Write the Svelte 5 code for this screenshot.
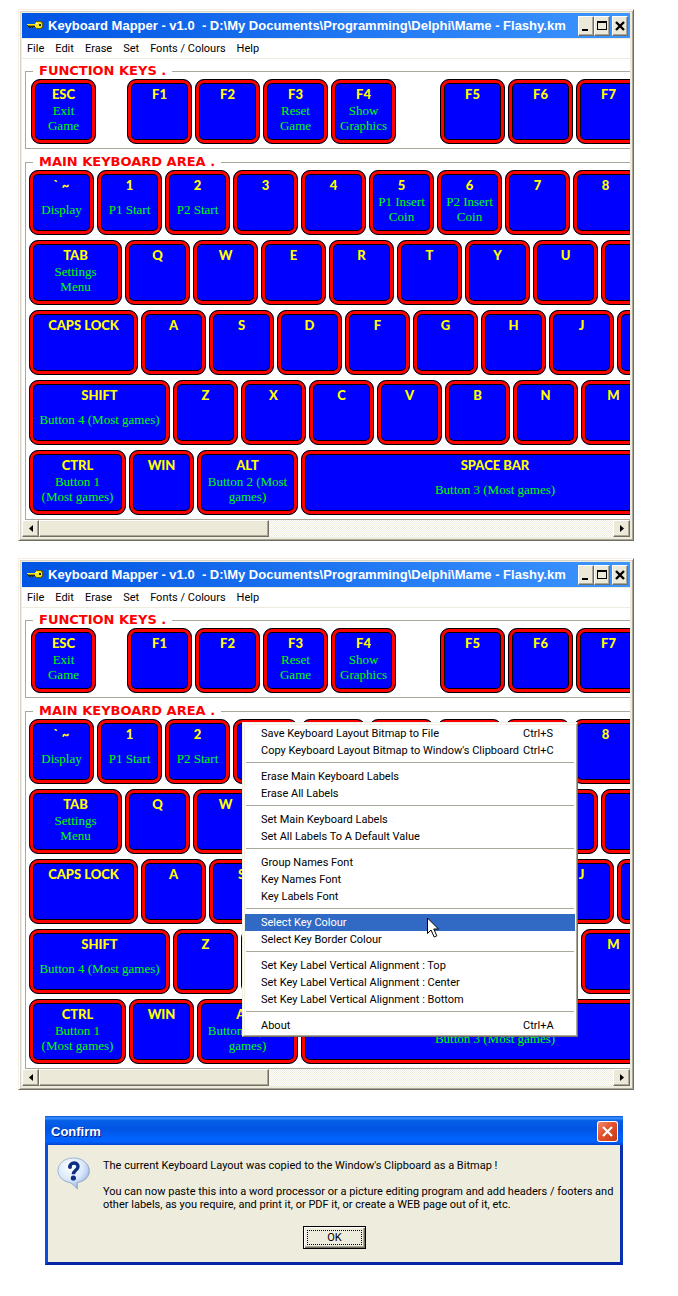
<script>
  const functionKeys = [
    { name: 'ESC', label: 'Exit\nGame' },
    { name: 'F1', before: 28 },
    { name: 'F2' },
    { name: 'F3', label: 'Reset\nGame' },
    { name: 'F4', label: 'Show\nGraphics' },
    { name: 'F5', before: 41 },
    { name: 'F6' },
    { name: 'F7' }
  ];
  const plain = (names) => names.map((name) => ({ name }));
  const mainRows = [
    [
      { name: '` ~', label: 'Display' },
      { name: '1', label: 'P1 Start' },
      { name: '2', label: 'P2 Start' },
      ...plain(['3', '4']),
      { name: '5', label: 'P1 Insert\nCoin' },
      { name: '6', label: 'P2 Insert\nCoin' },
      ...plain(['7', '8'])
    ],
    [{ name: 'TAB', label: 'Settings\nMenu', width: 93 }, ...plain(['Q', 'W', 'E', 'R', 'T', 'Y', 'U', ''])],
    [{ name: 'CAPS LOCK', width: 109 }, ...plain(['A', 'S', 'D', 'F', 'G', 'H', 'J', ''])],
    [{ name: 'SHIFT', label: 'Button 4 (Most games)', width: 141 }, ...plain(['Z', 'X', 'C', 'V', 'B', 'N', 'M'])],
    [
      { name: 'CTRL', label: 'Button 1\n(Most games)', width: 97 },
      { name: 'WIN' },
      { name: 'ALT', label: 'Button 2 (Most\ngames)', width: 101 },
      { name: 'SPACE BAR', label: 'Button 3 (Most games)', width: 388 }
    ]
  ];
  const menus = ['File', 'Edit', 'Erase', 'Set', 'Fonts / Colours', 'Help'];
  const popup = [
    [['Save Keyboard Layout Bitmap to File', 'Ctrl+S'], ["Copy Keyboard Layout Bitmap to Window's Clipboard", 'Ctrl+C']],
    [['Erase Main Keyboard Labels'], ['Erase All Labels']],
    [['Set Main Keyboard Labels'], ['Set All Labels To A Default Value']],
    [['Group Names Font'], ['Key Names Font'], ['Key Labels Font']],
    [['Select Key Colour'], ['Select Key Border Colour']],
    [
      ['Set Key Label Vertical Alignment : Top'],
      ['Set Key Label Vertical Alignment : Center'],
      ['Set Key Label Vertical Alignment : Bottom']
    ],
    [['About', 'Ctrl+A']]
  ];
  let selected = $state('Select Key Colour');
  const title = 'Keyboard Mapper - v1.0  - D:\\My Documents\\Programming\\Delphi\\Mame - Flashy.km';
</script>

{#snippet keyCap(k)}
  <button class="key" style:width="{k.width ?? 65}px" style:margin-left="{k.before ?? 0}px">
    <span class="name">{k.name}</span>
    {#if k.label}<span class="label">{k.label}</span>{/if}
  </button>
{/snippet}

{#snippet mapper(withPopup)}
  <section class="window">
    <header class="titlebar">
      <svg class="key-icon" width="18" height="11" viewBox="0 0 18 11" shape-rendering="crispEdges" aria-hidden="true">
        <path d="M1 4h8v3H7v1H6V7H5v1H3V7H2V6H1z" fill="#222" />
        <path d="M10 1h6v1h1v6h-1v1h-6V8H9V2h1z" fill="#5c5c14" />
        <path d="M1 4h8v1H1zM10 2h5v1h1v4h-1v1h-5V7H9V3h1z" fill="#f2e51c" />
        <path d="M2 5h7v1H2z" fill="#a39a12" />
        <path d="M13 4h2v2h-2z" fill="#222" />
        <path d="M10 3h2v1h-2z" fill="#fffbb0" />
      </svg>
      <h1>{title}</h1>
      <div class="controls">
        <button aria-label="Minimize"><svg width="12" height="12" viewBox="0 0 12 12"><path d="M2 9h6v2H2z" /></svg></button>
        <button aria-label="Maximize"><svg width="12" height="12" viewBox="0 0 12 12"><path fill-rule="evenodd" d="M1 1h10v9H1zM2 3v6h8V3z" /></svg></button>
        <button aria-label="Close"><svg width="12" height="12" viewBox="0 0 12 12"><path d="M2 2l8 8M10 2l-8 8" fill="none" stroke="#000" stroke-width="2.4" /></svg></button>
      </div>
    </header>
    <nav class="menubar">
      {#each menus as m}<button>{m}</button>{/each}
    </nav>
    <div class="viewport">
      <div class="board">
        <fieldset class="functions">
          <legend>FUNCTION KEYS .</legend>
          <div class="row">{#each functionKeys as k}{@render keyCap(k)}{/each}</div>
        </fieldset>
        <fieldset class="main">
          <legend>MAIN KEYBOARD AREA .</legend>
          {#each mainRows as row}
            <div class="row">{#each row as k}{@render keyCap(k)}{/each}</div>
          {/each}
        </fieldset>
      </div>
    </div>
    <div class="scrollbar">
      <button aria-label="Scroll left"><svg width="4" height="7" viewBox="0 0 4 7"><path d="M4 0v7L0 3.5z" /></svg></button>
      <div class="track"><div class="thumb"></div></div>
      <button aria-label="Scroll right"><svg width="4" height="7" viewBox="0 0 4 7"><path d="M0 0v7L4 3.5z" /></svg></button>
    </div>
    {#if withPopup}
      <div class="popup" role="menu">
        {#each popup as group, i}
          {#if i}<hr />{/if}
          {#each group as [text, shortcut]}
            <button role="menuitem" class:selected={text === selected} onmouseenter={() => (selected = text)}>
              <span>{text}</span>{#if shortcut}<span class="shortcut">{shortcut}</span>{/if}
            </button>
          {/each}
        {/each}
        <svg class="pointer" width="13" height="22" viewBox="0 0 13 22" aria-hidden="true">
          <path d="M.5 1v15.5L4 13l3.2 7 2.6-1.2L6.8 12h4.7z" fill="#fff" stroke="#000" />
        </svg>
      </div>
    {/if}
  </section>
{/snippet}

<main>
  {@render mapper(false)}
  {@render mapper(true)}

  <section class="dialog" role="dialog" aria-labelledby="confirm-title">
    <header>
      <h2 id="confirm-title">Confirm</h2>
      <button class="close" aria-label="Close"><svg width="21" height="21" viewBox="0 0 21 21"><path d="M6 6l9 9M15 6l-9 9" stroke="#fff" stroke-width="2.2" fill="none" /></svg></button>
    </header>
    <div class="body">
      <div class="message">
        <svg width="34" height="34" viewBox="0 0 34 34" aria-hidden="true">
          <defs>
            <radialGradient id="bubble" cx="40%" cy="30%" r="75%">
              <stop offset="0" stop-color="#fff" />
              <stop offset=".55" stop-color="#dce9fb" />
              <stop offset="1" stop-color="#8fb2e6" />
            </radialGradient>
          </defs>
          <path d="M17 2C8 2 2 7 2 14c0 6 4 10 11 12 3 1 5 4 8 7v-7c7-1.5 12-6 12-12C33 7 26 2 17 2z" fill="#8a8f98" opacity=".5" />
          <path d="M16.500 1C7.500 1 1 6.500 1 13.500c0 6 4.500 10.500 11.500 12 3 .8 5 3.500 7.500 6v-6c7.500-1.500 12-6 12-12C32 6.500 25.500 1 16.500 1z" fill="url(#bubble)" stroke="#8ba6cf" stroke-width=".8" />
          <path d="M12.800 9.800C13 5 21 4.600 21 9.500c0 3.700-4.600 3.900-4.600 7.700" fill="none" stroke="#0c2f83" stroke-width="3.400" />
          <circle cx="13" cy="10" r="2" fill="#0c2f83" />
          <circle cx="16.400" cy="21" r="2.600" fill="#0c2f83" />
        </svg>
        <div class="text">
          <p>The current Keyboard Layout was copied to the Window's Clipboard as a Bitmap !</p>
          <p>You can now paste this into a word processor or a picture editing program and add headers / footers and other labels, as you require, and print it, or PDF it, or create a WEB page out of it, etc.</p>
        </div>
      </div>
      <button class="ok"><span>OK</span></button>
    </div>
  </section>
</main>

<style>
  :global(body) { background: #fff; }
  button { font: inherit; color: inherit; padding: 0; margin: 0; border: 0; background: none; }
  h1, h2, p { margin: 0; }
  main {
    display: flex;
    flex-direction: column;
    gap: 17px;
    padding: 9px 44px 31px 18px;
    font: 11px/13px Roboto, "Liberation Sans", sans-serif;
    color: #000;
  }

  .window {
    position: relative;
    padding: 3px;
    background: #eeeddd;
    border: 1px solid;
    border-color: #f7eee6 #716f64 #716f64 #f7eee6;
    box-shadow: inset 1px 1px #fff, inset -1px -1px #aca899, inset 2px 2px #d8d6c8;
  }
  .titlebar {
    display: flex;
    align-items: center;
    height: 25px;
    padding: 0 2px 0 4px;
    background: linear-gradient(90deg, #0054e3, #3d95ff);
    color: #fff;
  }
  .titlebar h1 {
    flex: 1;
    min-width: 0;
    margin-left: 4px;
    overflow: hidden;
    white-space: pre;
    font: bold 13px/20px "Liberation Sans", Arial, sans-serif;
  }
  .key-icon { flex: none; }
  .controls { display: flex; }
  .controls button, .scrollbar button, .thumb {
    background: #ece9d8;
    border: 1px solid;
    border-color: #fff #716f64 #716f64 #fff;
    box-shadow: inset -1px -1px #aca899;
  }
  .controls button {
    display: grid;
    place-items: center;
    width: 16px;
    height: 20px;
  }
  .controls button:last-child { margin-left: 2px; }
  .controls svg { flex: none; }

  .menubar {
    display: flex;
    gap: 11px;
    height: 19px;
    padding: 0 5px;
    align-items: center;
    background: #fff;
    border: solid #eeeddd;
    border-width: 1px 0;
  }

  .viewport { overflow: hidden; background: #fff; }
  .board { width: max-content; min-width: 100%; padding: 4px 0 0 3px; }
  fieldset { margin: 0; border: 1px solid #aca899; }
  .functions { padding: 0 5px 4px; }
  .main { margin-top: 5px; padding: 0 3px 4px; }
  legend {
    padding: 0 6px;
    color: #f00;
    font: bold 13px/16px "DejaVu Sans", sans-serif;
  }
  .functions legend { margin-left: 2px; }
  .main legend { margin-left: 4px; }
  .row { display: flex; gap: 3px; }
  .row + .row { margin-top: 5px; }

  .key {
    flex: none;
    display: flex;
    flex-direction: column;
    align-items: center;
    justify-content: flex-start;
    height: 65px;
    padding: 6px 5px 9px;
    border: 1px solid #000;
    border-radius: 9px;
    background: #00f;
    box-shadow: inset 0 0 0 3px #f00, inset 0 0 0 4px #000;
  }
  .name {
    height: 16px;
    color: #ff0;
    font: 900 13px/16px Lato, sans-serif;
    white-space: pre;
  }
  .label {
    display: grid;
    align-content: center;
    flex: 1;
    color: #0f0;
    font: 13px/15px "Liberation Serif", "Times New Roman", serif;
    white-space: pre;
  }

  .scrollbar { display: flex; height: 17px; }
  .scrollbar button {
    display: grid;
    place-items: center;
    flex: none;
    width: 17px;
  }
  .track {
    flex: 1;
    background: repeating-conic-gradient(#fff 0 25%, #eeeddd 0 50%) 0 0 / 2px 2px;
  }
  .thumb { box-sizing: border-box; width: 40%; height: 17px; }

  .popup {
    position: absolute;
    left: 223px;
    top: 163px;
    box-sizing: border-box;
    width: 336px;
    padding: 2px;
    background: #fff;
    border: 1px solid;
    border-color: #f1efe2 #716f64 #716f64 #f1efe2;
    box-shadow: inset 1px 1px #fff, inset -1px -1px #aca899, inset 2px 2px #f1efe2;
  }
  .popup button {
    display: flex;
    justify-content: space-between;
    width: 100%;
    padding: 2px 0 2px 16px;
    line-height: 13px;
    text-align: left;
    white-space: nowrap;
  }
  .popup .selected { background: #316ac5; color: #fff; }
  .shortcut { width: 52px; }
  hr { height: 1px; margin: 3px 1px 5px; border: 0; background: #aca899; }
  .pointer { position: absolute; left: 184px; top: 194px; }

  .dialog {
    margin: 9px 11px 0 27px;
    border: solid;
    border-width: 0 3px 3px;
    border-color: #0a4be0 #0831b0 #0626a8 #0a4be0;
    background: #eeeddd;
  }
  .dialog header {
    display: flex;
    align-items: center;
    justify-content: space-between;
    height: 29px;
    margin: 0 -3px;
    padding: 0 5px 0 6px;
    box-sizing: border-box;
    background: linear-gradient(#0a50d0, #3a93ff 7%, #0560e8 16%, #0054e3 45%, #0061fb 75%, #0063ff 88%, #0046cf);
    color: #fff;
  }
  h2 {
    padding-top: 3px;
    font: bold 13px/16px "Liberation Sans", sans-serif;
    text-shadow: 1px 1px #0a1883;
  }
  .close {
    width: 21px;
    height: 21px;
    margin-top: 2px;
    border-radius: 3px;
    background: linear-gradient(135deg, #f0937a, #e1512d 45%, #c23a12);
    box-shadow: inset 0 0 0 1px #fff;
  }
  .close svg { display: block; }
  .body {
    display: flex;
    flex-direction: column;
    align-items: center;
    gap: 15px;
    padding: 12px 4px 13px 9px;
  }
  .message { display: flex; gap: 12px; }
  .message svg { flex: none; }
  .text { display: grid; gap: 13px; padding-top: 2px; }
  .ok {
    width: 63px;
    height: 23px;
    margin-right: 4px;
    padding: 2px;
    border: 1px solid #000;
    background: #eeeddd;
    box-shadow: inset 1px 1px #fff, inset -1px -1px #716f64, inset -2px -2px #aca899;
  }
  .ok span { display: block; margin: 1px; border: 1px dotted #000; line-height: 13px; }
</style>
